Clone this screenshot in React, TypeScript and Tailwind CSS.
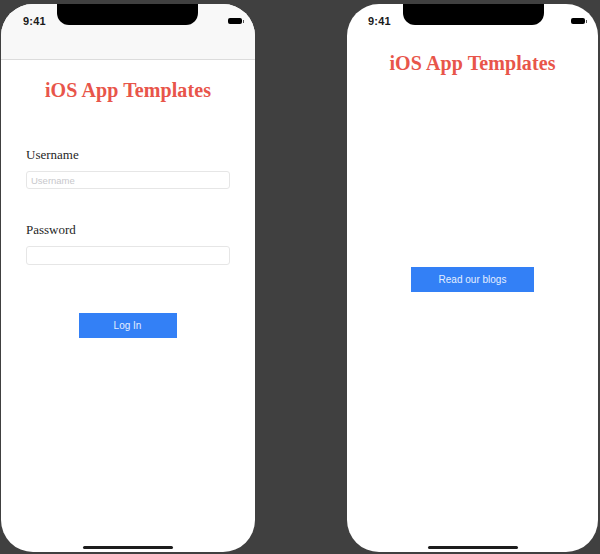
import React from 'react';

const serif = { fontFamily: '"Liberation Serif", "DejaVu Serif", serif' };
const sans = { fontFamily: '"Liberation Sans", Arial, sans-serif' };

const StatusBar: React.FC<{ timeOffset: string }> = ({ timeOffset }) => (
  <div className="flex items-center justify-between h-[33px] pr-[11px] pt-[1px]" style={sans}>
    <span className={`${timeOffset} text-[11px] font-bold text-[#1a1a1a] tracking-[0.2px]`}>9:41</span>
    <div className="flex items-center">
      <div className="w-[14px] h-[6px] rounded-[2px] bg-black" />
      <div className="w-[1px] h-[3px] bg-[#555] ml-[1px]" />
    </div>
  </div>
);

const Phone: React.FC<{ width: string; children: React.ReactNode }> = ({ width, children }) => (
  <div className={`relative ${width} h-[548px] bg-white rounded-[32px] overflow-hidden`}>
    {/* notch */}
    <div className="absolute left-[56px] top-0 w-[141px] h-[21px] bg-black rounded-b-[12px]" />
    {children}
    {/* home indicator */}
    <div className="absolute bottom-[3px] left-1/2 -translate-x-1/2 w-[90px] h-[3px] rounded-full bg-[#1c1c1c]" />
  </div>
);

const Title: React.FC = () => (
  <h1 className="text-center text-[20px] font-bold text-[#e8554a] leading-[24px] tracking-[0.1px]" style={serif}>
    iOS App Templates
  </h1>
);

const LoginScreen: React.FC = () => (
  <Phone width="w-[254px]">
    <div className="bg-[#f8f8f8] border-b border-[#dcdcdc] h-[56px]">
      <StatusBar timeOffset="pl-[22px]" />
    </div>
    <div className="pt-[18px]">
      <Title />
    </div>
    <div className="px-[25px] pt-[45px]">
      <label className="block text-[13px] text-[#1f1f1f] leading-[16px]" style={serif}>
        Username
      </label>
      <input
        placeholder="Username"
        className="mt-[8px] block w-[204px] h-[18px] border border-[#e6e6e6] rounded-[3px] px-[4px] text-[9.5px] placeholder:text-[#c8c8cc] outline-none"
        style={sans}
      />
      <label className="block mt-[33px] text-[13px] text-[#1f1f1f] leading-[16px]" style={serif}>
        Password
      </label>
      <input
        type="password"
        className="mt-[8px] block w-[204px] h-[19px] border border-[#e6e6e6] rounded-[3px] px-[4px] outline-none"
      />
      <div className="flex justify-center pt-[48px] pr-[1px]">
        <button
          className="w-[98px] h-[25px] bg-[#3380f6] text-[#e4eeff] text-[10px]"
          style={sans}
        >
          Log In
        </button>
      </div>
    </div>
  </Phone>
);

const HomeScreen: React.FC = () => (
  <Phone width="w-[251px]">
    <StatusBar timeOffset="pl-[21px]" />
    <div className="pt-[14px]">
      <Title />
    </div>
    <div className="flex justify-center pt-[192px]">
      <button
        className="w-[123px] h-[25px] bg-[#3380f6] text-[#e4eeff] text-[10px]"
        style={sans}
      >
        Read our blogs
      </button>
    </div>
  </Phone>
);

const App: React.FC = () => (
  <div className="w-[600px] h-[554px] bg-[#404040] flex justify-between pl-[1px] pr-[2px] pt-[4px] overflow-hidden">
    <LoginScreen />
    <HomeScreen />
  </div>
);

export default App;
